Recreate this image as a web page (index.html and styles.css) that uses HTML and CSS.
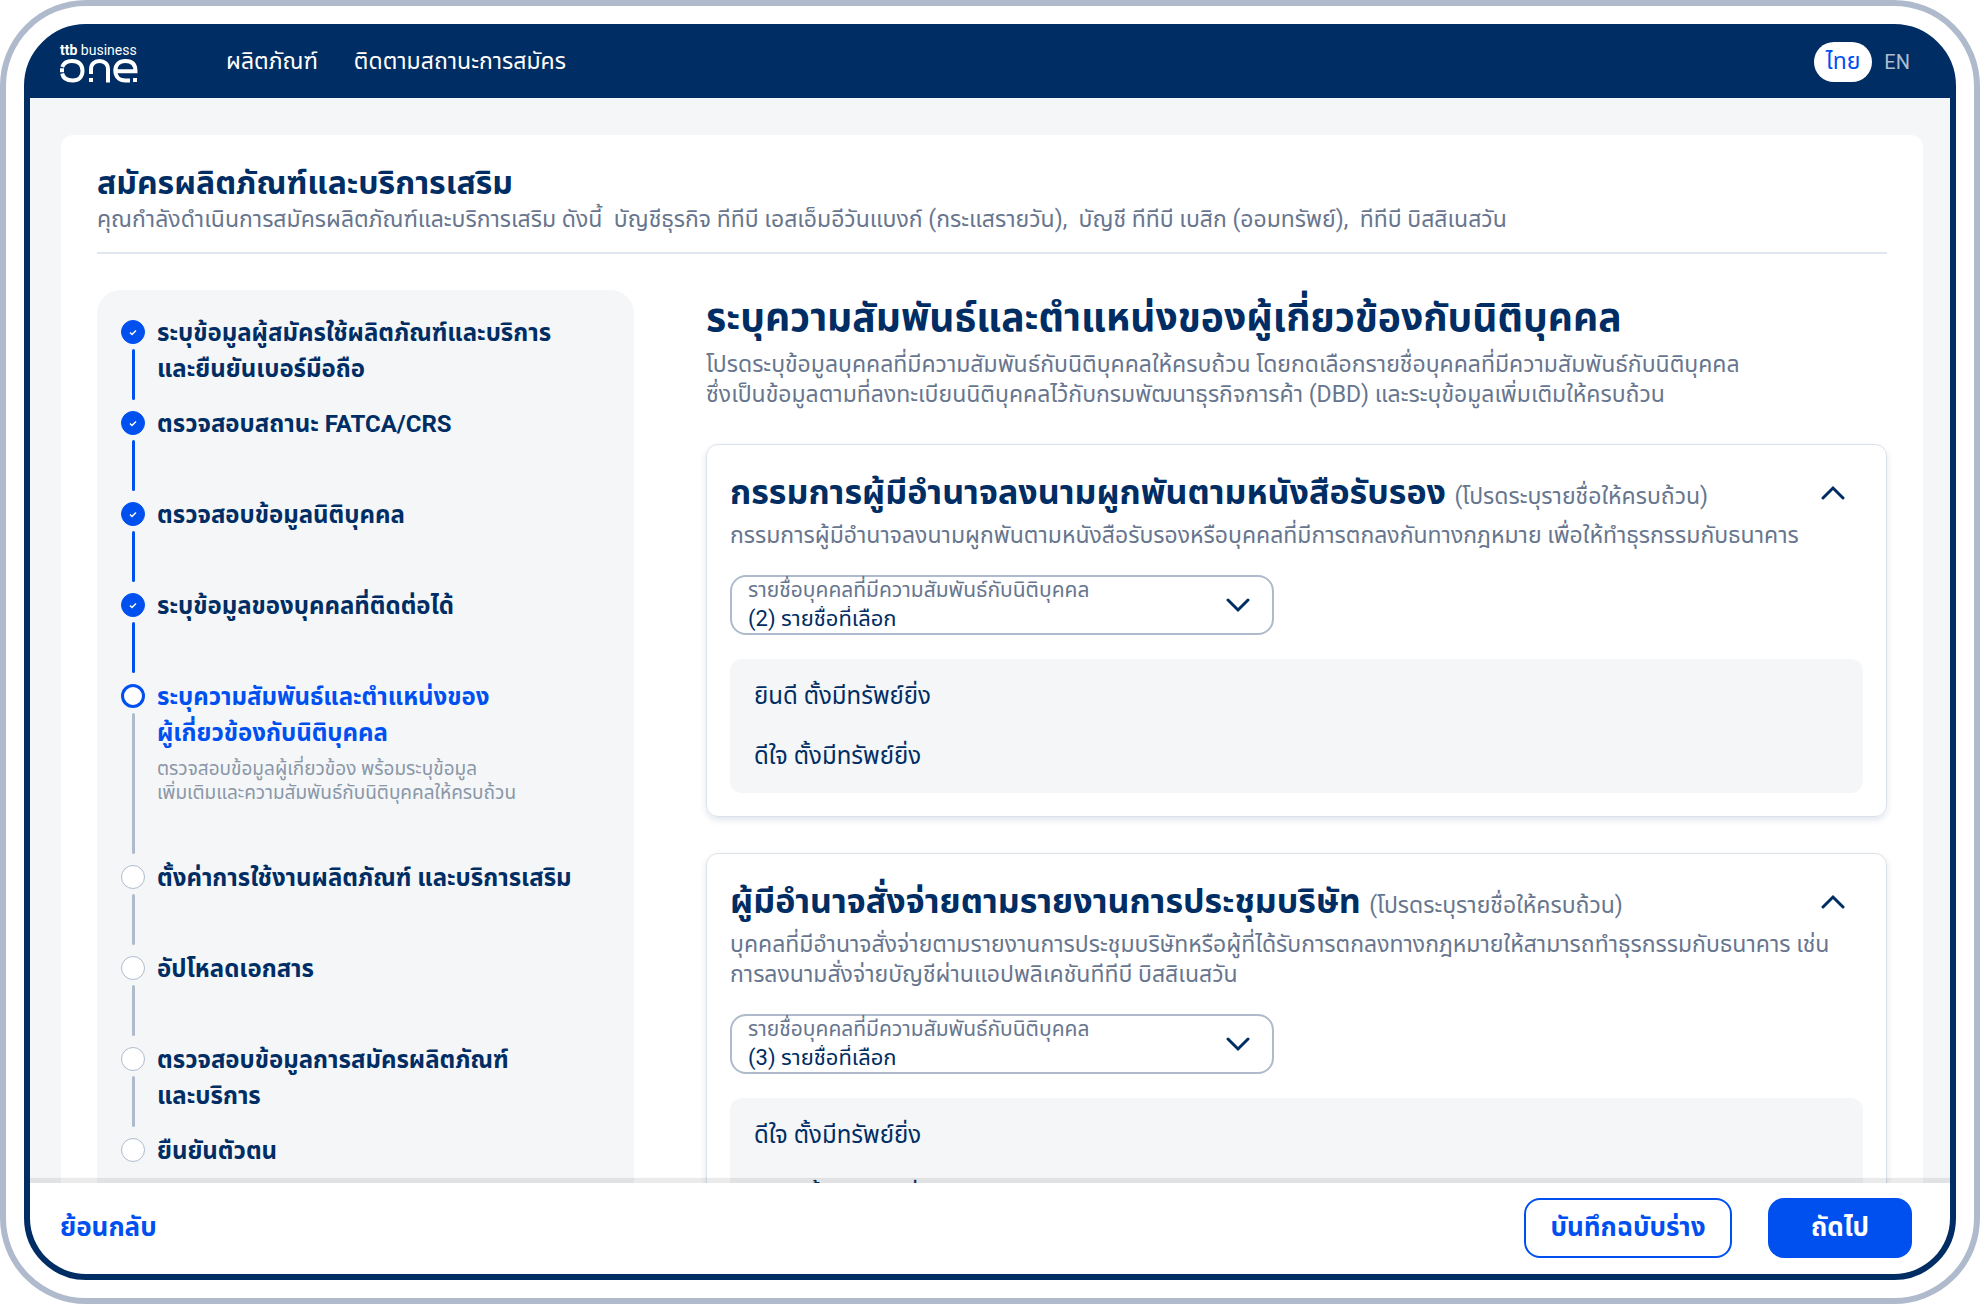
FILE: index.html
```
<!DOCTYPE html>
<html lang="th">
<head>
  <meta charset="utf-8">
  <title>ttb business one</title>
  <link rel="stylesheet" href="styles.css">
</head>
<body>
  <div class="device">
    <div class="screen">

      <header class="topbar">
        <a class="logo" href="#" aria-label="ttb business one">
          <span class="logo-small"><b>ttb</b> business</span>
          <svg width="78" height="24" viewBox="0 0 78 24" fill="none" stroke="#fff" stroke-width="4">
            <path d="M2.200 8C3.500 4.500 6.500 2 12 2c7 0 10.500 4 10.500 9.800S19 21.500 12.500 21.500C6 21.500 3 18.500 2.200 14.500M0 11.200h4"/>
            <path d="M31 15v-4.500C31 5 34.500 2 39.500 2S48 5 48 10.500V23.500M29 21h4"/>
            <path d="M57 12.300H75.500C75.500 5.500 72 2 65.500 2 59 2 55.300 6 55.300 11.800s4 9.700 10.200 9.700h4.500M73 21h4"/>
          </svg>
        </a>
        <nav class="menu">
          <a href="#">ผลิตภัณฑ์</a>
          <a href="#">ติดตามสถานะการสมัคร</a>
        </nav>
        <div class="lang">
          <button class="lang-btn active">ไทย</button>
          <button class="lang-btn">EN</button>
        </div>
      </header>

      <main class="content">
        <div class="card">
          <div class="card-head">
            <h1>สมัครผลิตภัณฑ์และบริการเสริม</h1>
            <p>คุณกำลังดำเนินการสมัครผลิตภัณฑ์และบริการเสริม ดังนี้ &nbsp;บัญชีธุรกิจ ทีทีบี เอสเอ็มอีวันแบงก์ (กระแสรายวัน), &nbsp;บัญชี ทีทีบี เบสิก (ออมทรัพย์), &nbsp;ทีทีบี บิสสิเนสวัน</p>
          </div>

          <div class="columns">
            <ol class="steps">
              <li class="step done">
                <div class="marker"><span class="dot"><svg width="8" height="7" viewBox="0 0 8 7"><path d="M1 3.500l2 2 4-4"/></svg></span></div>
                <div class="step-text">ระบุข้อมูลผู้สมัครใช้ผลิตภัณฑ์และบริการ<br>และยืนยันเบอร์มือถือ</div>
              </li>
              <li class="step done">
                <div class="marker"><span class="dot"><svg width="8" height="7" viewBox="0 0 8 7"><path d="M1 3.500l2 2 4-4"/></svg></span></div>
                <div class="step-text">ตรวจสอบสถานะ FATCA/CRS</div>
              </li>
              <li class="step done">
                <div class="marker"><span class="dot"><svg width="8" height="7" viewBox="0 0 8 7"><path d="M1 3.500l2 2 4-4"/></svg></span></div>
                <div class="step-text">ตรวจสอบข้อมูลนิติบุคคล</div>
              </li>
              <li class="step done">
                <div class="marker"><span class="dot"><svg width="8" height="7" viewBox="0 0 8 7"><path d="M1 3.500l2 2 4-4"/></svg></span></div>
                <div class="step-text">ระบุข้อมูลของบุคคลที่ติดต่อได้</div>
              </li>
              <li class="step current">
                <div class="marker"><span class="dot"></span></div>
                <div class="step-text">ระบุความสัมพันธ์และตำแหน่งของ<br>ผู้เกี่ยวข้องกับนิติบุคคล
                  <p>ตรวจสอบข้อมูลผู้เกี่ยวข้อง พร้อมระบุข้อมูล<br>เพิ่มเติมและความสัมพันธ์กับนิติบุคคลให้ครบถ้วน</p>
                </div>
              </li>
              <li class="step">
                <div class="marker"><span class="dot"></span></div>
                <div class="step-text">ตั้งค่าการใช้งานผลิตภัณฑ์ และบริการเสริม</div>
              </li>
              <li class="step">
                <div class="marker"><span class="dot"></span></div>
                <div class="step-text">อัปโหลดเอกสาร</div>
              </li>
              <li class="step">
                <div class="marker"><span class="dot"></span></div>
                <div class="step-text">ตรวจสอบข้อมูลการสมัครผลิตภัณฑ์<br>และบริการ</div>
              </li>
              <li class="step">
                <div class="marker"><span class="dot"></span></div>
                <div class="step-text">ยืนยันตัวตน</div>
              </li>
            </ol>

            <section class="form">
              <h2>ระบุความสัมพันธ์และตำแหน่งของผู้เกี่ยวข้องกับนิติบุคคล</h2>
              <p class="form-desc">โปรดระบุข้อมูลบุคคลที่มีความสัมพันธ์กับนิติบุคคลให้ครบถ้วน โดยกดเลือกรายชื่อบุคคลที่มีความสัมพันธ์กับนิติบุคคล<br>ซึ่งเป็นข้อมูลตามที่ลงทะเบียนนิติบุคคลไว้กับกรมพัฒนาธุรกิจการค้า (DBD) และระบุข้อมูลเพิ่มเติมให้ครบถ้วน</p>

              <div class="panel">
                <div class="panel-head">
                  <h3>กรรมการผู้มีอำนาจลงนามผูกพันตามหนังสือรับรอง <small>(โปรดระบุรายชื่อให้ครบถ้วน)</small></h3>
                  <button class="toggle" aria-label="ย่อ"><svg width="24" height="16" viewBox="0 0 24 16"><path d="M2 13L12 3l10 10"/></svg></button>
                </div>
                <p class="panel-desc">กรรมการผู้มีอำนาจลงนามผูกพันตามหนังสือรับรองหรือบุคคลที่มีการตกลงกันทางกฎหมาย เพื่อให้ทำธุรกรรมกับธนาคาร</p>
                <div class="field">
                  <div class="field-text">
                    <label for="director">รายชื่อบุคคลที่มีความสัมพันธ์กับนิติบุคคล</label>
                    <select id="director"><option>(2) รายชื่อที่เลือก</option></select>
                  </div>
                  <svg width="24" height="16" viewBox="0 0 24 16"><path d="M2 3l10 10L22 3"/></svg>
                </div>
                <ul class="names">
                  <li>ยินดี ตั้งมีทรัพย์ยิ่ง</li>
                  <li>ดีใจ ตั้งมีทรัพย์ยิ่ง</li>
                </ul>
              </div>

              <div class="panel">
                <div class="panel-head">
                  <h3>ผู้มีอำนาจสั่งจ่ายตามรายงานการประชุมบริษัท <small>(โปรดระบุรายชื่อให้ครบถ้วน)</small></h3>
                  <button class="toggle" aria-label="ย่อ"><svg width="24" height="16" viewBox="0 0 24 16"><path d="M2 13L12 3l10 10"/></svg></button>
                </div>
                <p class="panel-desc">บุคคลที่มีอำนาจสั่งจ่ายตามรายงานการประชุมบริษัทหรือผู้ที่ได้รับการตกลงทางกฎหมายให้สามารถทำธุรกรรมกับธนาคาร เช่น<br>การลงนามสั่งจ่ายบัญชีผ่านแอปพลิเคชันทีทีบี บิสสิเนสวัน</p>
                <div class="field">
                  <div class="field-text">
                    <label for="payer">รายชื่อบุคคลที่มีความสัมพันธ์กับนิติบุคคล</label>
                    <select id="payer"><option>(3) รายชื่อที่เลือก</option></select>
                  </div>
                  <svg width="24" height="16" viewBox="0 0 24 16"><path d="M2 3l10 10L22 3"/></svg>
                </div>
                <ul class="names">
                  <li>ดีใจ ตั้งมีทรัพย์ยิ่ง</li>
                  <li>ยินดี ตั้งมีทรัพย์ยิ่ง</li>
                </ul>
              </div>
            </section>
          </div>
        </div>
      </main>

      <footer class="actions">
        <a class="back" href="#">ย้อนกลับ</a>
        <button class="btn outline">บันทึกฉบับร่าง</button>
        <button class="btn primary">ถัดไป</button>
      </footer>

    </div>
  </div>
</body>
</html>
```
FILE: styles.css
```
*{
  box-sizing: border-box;
}
body{
  margin: 0;
  background: #fff;
  color: #002d63;
  font-family: Roboto, "Noto Sans Thai", sans-serif;
}
h1, h2, h3, p, ol, ul{
  margin: 0;
  padding: 0;
  list-style: none;
}
button, select{
  font-family: inherit;
  color: inherit;
  border: none;
  background: none;
  padding: 0;
}
a{
  color: inherit;
  text-decoration: none;
}

.device{
  height: 100vh;
  padding: 18px;
  border: 6px solid #afbbcd;
  border-radius: 86px;
}
.screen{
  height: 100%;
  display: flex;
  flex-direction: column;
  border: 6px solid #002d63;
  border-radius: 62px;
  background: #002d63;
  overflow: hidden;
  white-space: nowrap;
}

/* top bar */
.topbar{
  flex: none;
  height: 68px;
  display: flex;
  align-items: center;
  padding: 0 40px 4px 30px;
  background: #002d63;
  color: #fff;
}
.logo{
  width: 166px;
  display: flex;
  flex-direction: column;
}
.logo-small{
  font-size: 14px;
  line-height: 18px;
}
.menu{
  display: flex;
  gap: 36px;
  font-size: 23px;
  line-height: 32px;
}
.lang{
  margin-left: auto;
  display: flex;
}
.lang-btn{
  height: 40px;
  padding: 0 0 0 12px;
  border-radius: 20px;
  font-size: 20px;
  color: #afbbcd;
}
.lang-btn.active{
  padding: 0 12px;
  background: #fff;
  color: #0050f0;
  font-size: 23px;
}

/* page card */
.content{
  flex: 1;
  min-height: 0;
  overflow: hidden;
  padding: 37px 27px 0 31px;
  background: #f4f6f8;
}
.card{
  background: #fff;
  border-radius: 12px;
  padding: 28px 36px 36px;
}
.card-head{
  padding-bottom: 15px;
  border-bottom: 2px solid #e1e7ee;
}
.card-head h1{
  font-size: 32px;
  line-height: 40px;
}
.card-head p{
  font-size: 23px;
  line-height: 34px;
  color: #67768e;
}
.columns{
  display: flex;
  align-items: flex-start;
  gap: 72px;
  padding-top: 36px;
}

/* steps */
.steps{
  flex: none;
  width: 30%;
  padding: 25px 24px;
  border-radius: 24px;
  background: #f4f6f8;
}
.step{
  display: flex;
  gap: 12px;
  min-height: 91px;
}
.marker{
  width: 24px;
  padding: 5px 0 6px;
  display: flex;
  flex-direction: column;
  align-items: center;
  gap: 5px;
}
.marker::after{
  content: "";
  flex: 1;
  width: 3px;
  border-radius: 2px;
  background: #afbbcd;
}
.dot{
  flex: none;
  width: 24px;
  height: 24px;
  display: flex;
  align-items: center;
  justify-content: center;
  border: 1px solid #afbbcd;
  border-radius: 50%;
  background: #fff;
}
.dot path{
  fill: none;
  stroke: #fff;
  stroke-width: 1.500;
}
.done .dot{
  border-color: #0050f0;
  background: #0050f0;
}
.done .marker::after{
  background: #0050f0;
}
.step:last-child .marker::after{
  display: none;
}
.step-text{
  font-size: 24px;
  line-height: 36px;
  font-weight: bold;
}
.current{
  min-height: 181px;
  color: #0050f0;
}
.current .dot{
  border: 3px solid #0050f0;
}
.step-text p{
  margin-top: 6px;
  font-size: 19px;
  line-height: 24px;
  font-weight: normal;
  color: #8a97a8;
}

/* form */
.form{
  flex: 1;
  min-width: 0;
}
.form h2{
  font-size: 39px;
  line-height: 56px;
}
.form-desc{
  margin: 4px 0 34px;
  font-size: 23px;
  line-height: 30px;
  color: #67768e;
}
.panel{
  margin-bottom: 36px;
  padding: 23px;
  border: 1px solid #dbe2ea;
  border-radius: 12px;
  box-shadow: 0 3px 6px rgba(0, 45, 99, 0.12);
}
.panel-head{
  display: flex;
  align-items: center;
  justify-content: space-between;
  padding-right: 18px;
}
.panel h3{
  font-size: 34px;
  line-height: 48px;
}
.panel small{
  font-size: 23px;
  font-weight: normal;
  color: #67768e;
}
.panel-desc{
  font-size: 23px;
  line-height: 30px;
  color: #67768e;
}
.toggle svg, .field svg{
  display: block;
  fill: none;
  stroke: #002d63;
  stroke-width: 3;
  stroke-linecap: round;
}
.toggle{
  padding-bottom: 4px;
}
.field{
  width: 544px;
  max-width: 100%;
  height: 60px;
  margin: 24px 0;
  padding: 0 22px 0 16px;
  display: flex;
  align-items: center;
  border: 2px solid #afbbcd;
  border-radius: 16px;
}
.field-text{
  flex: 1;
  display: flex;
  flex-direction: column;
}
.field label{
  font-size: 21px;
  line-height: 26px;
  color: #67768e;
}
.field select{
  appearance: none;
  height: 30px;
  font-size: 22px;
}
.names{
  padding: 7px 24px;
  border-radius: 12px;
  background: #f4f6f8;
  font-size: 24px;
  line-height: 60px;
}

/* bottom bar */
.actions{
  position: relative;
  flex: none;
  height: 91px;
  display: flex;
  align-items: center;
  gap: 36px;
  padding: 0 38px 2px 30px;
  background: #fff;
  box-shadow: 0 -5px 1px rgba(0, 0, 0, 0.08);
}
.back{
  margin-right: auto;
  font-size: 26px;
  font-weight: bold;
  color: #0050f0;
}
.btn{
  height: 60px;
  border-radius: 16px;
  font-size: 26px;
  font-weight: bold;
}
.outline{
  width: 208px;
  border: 2px solid #0050f0;
  color: #0050f0;
}
.primary{
  width: 144px;
  background: #0050f0;
  color: #fff;
}
```
